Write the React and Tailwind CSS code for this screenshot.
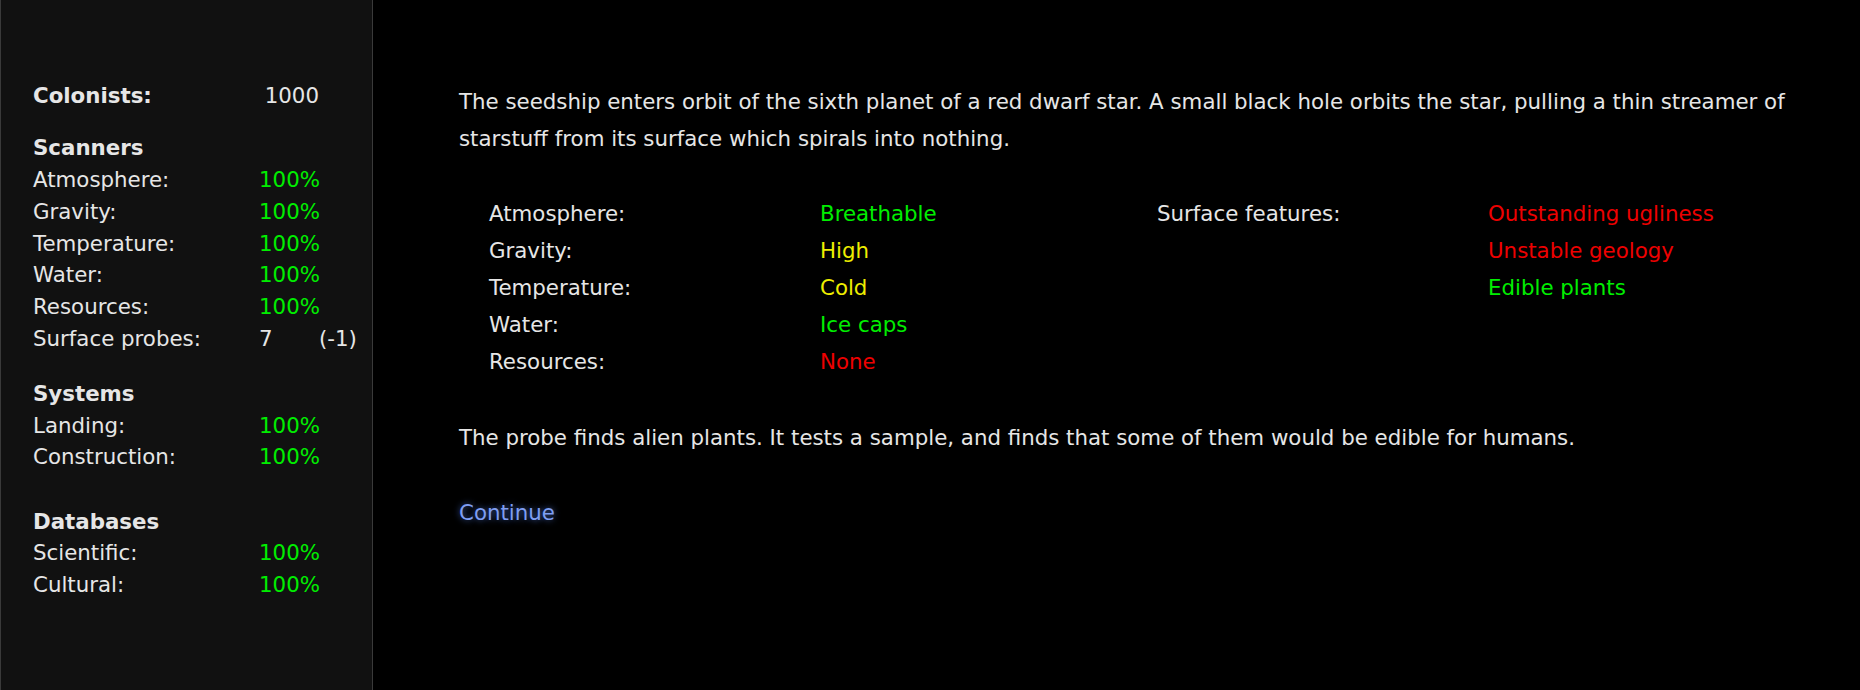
const scanners = [
  ['Atmosphere:', '100%'],
  ['Gravity:', '100%'],
  ['Temperature:', '100%'],
  ['Water:', '100%'],
  ['Resources:', '100%'],
];

const planet = [
  ['Atmosphere:', 'Breathable', 'text-[#00ee00]', 'Surface features:', 'Outstanding ugliness', 'text-[#ee0000]'],
  ['Gravity:', 'High', 'text-[#eeee00]', '', 'Unstable geology', 'text-[#ee0000]'],
  ['Temperature:', 'Cold', 'text-[#eeee00]', '', 'Edible plants', 'text-[#00ee00]'],
  ['Water:', 'Ice caps', 'text-[#00ee00]', '', '', ''],
  ['Resources:', 'None', 'text-[#ee0000]', '', '', ''],
];

function Row({ label, value, extra }) {
  return (
    <div className="grid grid-cols-[226px_60px_auto]">
      <span>{label}</span>
      <span className="text-[#00ee00]">{value}</span>
      {extra ? <span>{extra}</span> : null}
    </div>
  );
}

export default function App() {
  return (
    <div className="flex min-h-[690px] w-full bg-black text-[#e6e6e6] font-['DejaVu_Sans',sans-serif] text-[21.33px]">
      {/* Sidebar */}
      <aside className="w-[373px] shrink-0 border-x border-[#3a3a3a] bg-[#111111] pl-[32px] pt-[80px] leading-[31.8px]">
        <div className="grid grid-cols-[226px_60px]">
          <span className="font-bold">Colonists:</span>
          <span className="text-right">1000</span>
        </div>

        <div className="mt-[20.5px]">
          <div className="font-bold">Scanners</div>
          {scanners.map(([l, v]) => (
            <Row key={l} label={l} value={v} />
          ))}
          <div className="grid grid-cols-[226px_60px_auto]">
            <span>Surface probes:</span>
            <span>7</span>
            <span>(-1)</span>
          </div>
        </div>

        <div className="mt-[23px]">
          <div className="font-bold">Systems</div>
          <Row label="Landing:" value="100%" />
          <Row label="Construction:" value="100%" />
        </div>

        <div className="mt-[32.3px]">
          <div className="font-bold">Databases</div>
          <Row label="Scientific:" value="100%" />
          <Row label="Cultural:" value="100%" />
        </div>
      </aside>

      {/* Main */}
      <main className="flex-1 pl-[86px] pr-[10px] pt-[84px] leading-[36.9px]">
        <p>
          The seedship enters orbit of the sixth planet of a red dwarf star. A small black hole orbits the star, pulling a thin streamer of starstuff from its surface which spirals into nothing.
        </p>

        <div className="mt-[38.5px] ml-[30px] grid grid-cols-[331px_337px_331px_1fr]">
          {planet.map(([l, v, c, l2, v2, c2]) => (
            <div key={l} className="contents">
              <span>{l}</span>
              <span className={c}>{v}</span>
              <span>{l2}</span>
              <span className={c2}>{v2}</span>
            </div>
          ))}
        </div>

        <p className="mt-[39px]">
          The probe finds alien plants. It tests a sample, and finds that some of them would be edible for humans.
        </p>

        <div className="mt-[37.8px]">
          <a
            href="#"
            className="text-[#7f9ef2] [text-shadow:0_0_6px_rgba(90,140,255,0.7)]"
          >
            Continue
          </a>
        </div>
      </main>
    </div>
  );
}
